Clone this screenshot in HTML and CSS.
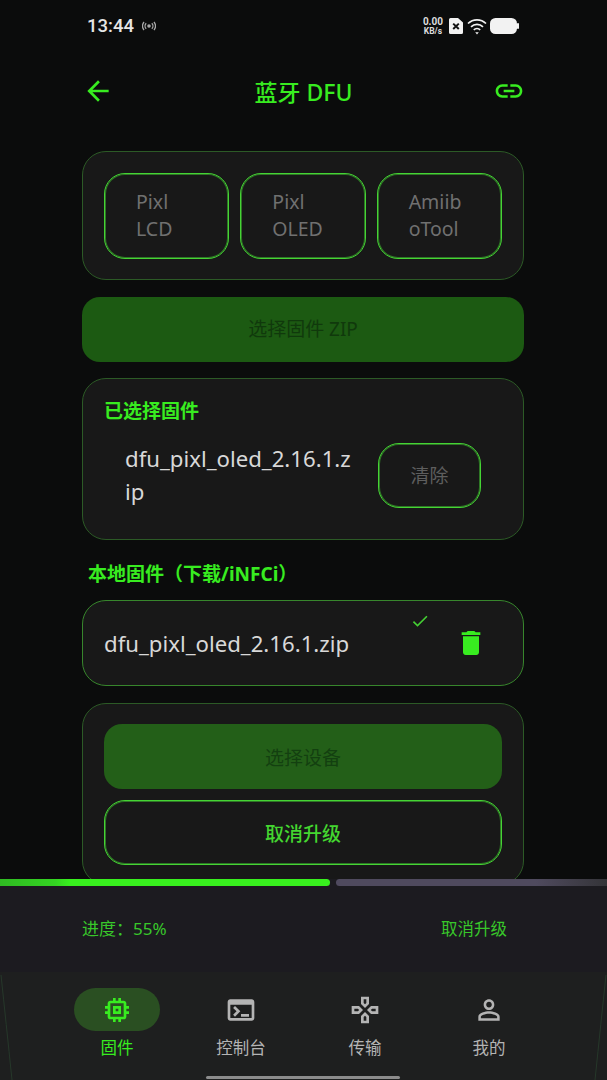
FILE: index.html
```html
<!DOCTYPE html>
<html lang="zh">
<head>
<meta charset="utf-8">
<title>蓝牙 DFU</title>
<link rel="stylesheet" href="styles.css">
</head>
<body>
<div class="page">
  <div class="status">
    <div class="status-left">
      <span class="time">13:44</span>
      <svg class="cast" viewBox="0 0 14 10"><circle cx="7" cy="5" r="1.8" fill="#aaa"/><path d="M4.200 2.200a4 4 0 0 0 0 5.600M9.800 2.200a4 4 0 0 1 0 5.600M2 1a6.500 6.500 0 0 0 0 8M12 1a6.500 6.500 0 0 1 0 8" fill="none" stroke="#aaa" stroke-width="1.300"/></svg>
    </div>
    <div class="status-right">
      <span class="speed"><b class="speed-value">0.00</b><b class="speed-unit">KB/s</b></span>
      <svg class="sim" viewBox="0 0 14 16"><path d="M1.500 0H9l5 4.500v10a1.500 1.500 0 0 1-1.500 1.500h-11A1.500 1.500 0 0 1 0 14.500v-13A1.500 1.500 0 0 1 1.500 0z" fill="#f2f2f2"/><path d="M4.200 5.600l5.600 5.400M9.800 5.600l-5.600 5.400" stroke="#111" stroke-width="2"/></svg>
      <svg class="wifi" viewBox="0 0 20 17"><path d="M1 5.500a13 13 0 0 1 18 0M4 8.800a8.800 8.800 0 0 1 12 0M6.800 11.800a4.600 4.600 0 0 1 6.400 0" fill="none" stroke="#f2f2f2" stroke-width="1.700"/><path d="M8.200 14.200h3.600L10 16.500z" fill="#f2f2f2"/></svg>
      <svg class="battery" viewBox="0 0 29 16"><rect width="27" height="16" rx="5.500" fill="#f2f2f2"/><rect x="27" y="5" width="2" height="6" rx="1" fill="#f2f2f2"/></svg>
    </div>
  </div>

  <header class="top">
    <svg class="icon32 green" viewBox="0 0 24 24"><path d="M20 11H7.830l5.590-5.590L12 4l-8 8 8 8 1.410-1.410L7.830 13H20v-2z"/></svg>
    <h1 class="title">蓝牙 DFU</h1>
    <svg class="icon32 green" viewBox="0 0 24 24"><path d="M3.900 12c0-1.710 1.390-3.100 3.100-3.100h4V7H7c-2.760 0-5 2.240-5 5s2.240 5 5 5h4v-1.900H7c-1.710 0-3.100-1.390-3.100-3.100zM8 13h8v-2H8v2zm9-6h-4v1.900h4c1.710 0 3.100 1.390 3.100 3.100s-1.390 3.100-3.100 3.100h-4V17h4c2.760 0 5-2.240 5-5s-2.240-5-5-5z"/></svg>
  </header>

  <main class="content">
    <section class="card types">
      <button class="type"><span>Pixl<br>LCD</span></button>
      <button class="type"><span>Pixl<br>OLED</span></button>
      <button class="type"><span>Amiib<br>oTool</span></button>
    </section>

    <button class="solid zip">选择固件 ZIP</button>

    <section class="card selected">
      <h2 class="label">已选择固件</h2>
      <div class="selected-row">
        <p class="filename wrap">dfu_pixl_oled_2.16.1.zip</p>
        <button class="clear">清除</button>
      </div>
    </section>

    <h2 class="label section">本地固件（下载/iNFCi）</h2>

    <section class="card local">
      <p class="filename">dfu_pixl_oled_2.16.1.zip</p>
      <svg class="check" viewBox="0 0 24 24"><path d="M9 16.170L4.830 12l-1.420 1.410L9 19 21 7l-1.410-1.410z"/></svg>
      <svg class="trash green" viewBox="0 0 24 24"><path d="M6 19c0 1.100.9 2 2 2h8c1.100 0 2-.9 2-2V7H6v12zM19 4h-3.500l-1-1h-5l-1 1H5v2h14V4z"/></svg>
    </section>

    <section class="card actions">
      <button class="solid device">选择设备</button>
      <button class="outline">取消升级</button>
    </section>
  </main>

  <div class="progress-panel">
    <div class="bar"><span class="bar-done"></span><span class="bar-rest"></span></div>
    <div class="progress-row"><span>进度：55%</span><span class="cancel-link">取消升级</span></div>
  </div>

  <nav class="tabs">
    <div class="tab active">
      <span class="pill"><svg class="icon32" viewBox="0 0 24 24"><path d="M15 9H9v6h6V9zm-2 4h-2v-2h2v2zm8-2V9h-2V7c0-1.100-.9-2-2-2h-2V3h-2v2h-2V3H9v2H7c-1.100 0-2 .9-2 2v2H3v2h2v2H3v2h2v2c0 1.100.9 2 2 2h2v2h2v-2h2v2h2v-2h2c1.100 0 2-.9 2-2v-2h2v-2h-2v-2h2zm-4 6H7V7h10v10z"/></svg></span>
      <span class="tab-label">固件</span>
    </div>
    <div class="tab">
      <span class="pill"><svg class="icon32" viewBox="0 0 24 24"><path d="M20 4H4c-1.100 0-2 .9-2 2v12c0 1.100.9 2 2 2h16c1.100 0 2-.9 2-2V6c0-1.100-.9-2-2-2zm0 14H4V8h16v10zm-2-1h-6v-2h6v2zM7.500 17l-1.410-1.410L8.670 13l-2.590-2.590L7.500 9l4 4-4 4z"/></svg></span>
      <span class="tab-label">控制台</span>
    </div>
    <div class="tab">
      <span class="pill"><svg class="icon32" viewBox="0 0 24 24"><path d="M13 4v2.670l-1 1-1-1V4h2m7 7v2h-2.670l-1-1 1-1H20M6.670 11l1 1-1 1H4v-2h2.670M12 16.330l1 1V20h-2v-2.670l1-1M15 2H9v5.500l3 3 3-3V2zm7 7h-5.500l-3 3 3 3H22V9zM7.500 9H2v6h5.500l3-3-3-3zm4.500 4.500l-3 3V22h6v-5.500l-3-3z"/></svg></span>
      <span class="tab-label">传输</span>
    </div>
    <div class="tab">
      <span class="pill"><svg class="icon32" viewBox="0 0 24 24"><path d="M12 5.900c1.160 0 2.100.94 2.100 2.100s-.94 2.100-2.100 2.100S9.900 9.160 9.900 8s.94-2.100 2.100-2.100m0 9c2.970 0 6.100 1.460 6.100 2.100v1.100H5.900V17c0-.64 3.130-2.100 6.100-2.100M12 4C9.790 4 8 5.790 8 8s1.790 4 4 4 4-1.790 4-4-1.790-4-4-4zm0 9c-2.670 0-8 1.340-8 4v3h16v-3c0-2.660-5.330-4-8-4z"/></svg></span>
      <span class="tab-label">我的</span>
    </div>
    <svg class="edges" viewBox="0 0 607 108" preserveAspectRatio="none"><path d="M1 3Q6 50 12 108M606 3Q601 50 595 108" fill="none" stroke="#26382a" stroke-width="1"/></svg>
    <span class="home"></span>
  </nav>
</div>
</body>
</html>
```

FILE: styles.css
```css
* { box-sizing: border-box; }
html, body { margin: 0; padding: 0; }
body {
  background: #0b0c0c;
  font-family: "Noto Sans", "Noto Sans CJK SC", sans-serif;
  color: #ddd;
}
.page {
  width: 607px;
  height: 1080px;
  display: flex;
  flex-direction: column;
  overflow: hidden;
}
button { font-family: inherit; background: none; padding: 0; }
h1, h2, p { margin: 0; font-weight: 400; }
svg { display: block; fill: currentColor; flex: none; }
.green { color: #38ec20; }

.status {
  height: 52px;
  padding: 0 88px 0 87px;
  display: flex;
  justify-content: space-between;
  align-items: center;
}
.status-left, .status-right { display: flex; align-items: center; }
.time { font-size: 18.500px; font-weight: 500; color: #e6e6e6; font-family: "Roboto", sans-serif; }
.cast { width: 14px; height: 10px; margin-left: 8px; }
.speed { display: flex; flex-direction: column; align-items: center; font-family: "Roboto", sans-serif; color: #ddd; }
.speed-value { font-size: 10px; line-height: 10px; font-weight: 700; }
.speed-unit { font-size: 8.500px; line-height: 9px; font-weight: 700; }
.sim { width: 14px; height: 16px; margin-left: 6px; }
.wifi { width: 20px; height: 17px; margin-left: 4px; }
.battery { width: 29px; height: 16px; margin-left: 3px; }

.top {
  height: 78px;
  padding: 0 82px;
  display: flex;
  align-items: center;
  justify-content: space-between;
}
.icon32 { width: 32px; height: 32px; }
.title { font-size: 23px; font-weight: 500; color: #38ec20; }

.content {
  flex: 1;
  min-height: 0;
  overflow: hidden;
  padding: 21px 83px 0 82px;
  display: flex;
  flex-direction: column;
  gap: 17px;
}
.card {
  flex: none;
  background: #181818;
  border: 1px solid #2c5a26;
  border-radius: 24px;
  padding: 21px;
}
.types { height: 129px; display: flex; gap: 11px; }
.type {
  flex: 1;
  height: 86px;
  border: 1px solid #45d434;
  box-shadow: inset 0 0 0 1px rgba(69, 212, 52, .5);
  border-radius: 21px;
  padding: 0 0 2px 31px;
  text-align: left;
  color: #707070;
  font-size: 19.500px;
  line-height: 27px;
}
.solid {
  flex: none;
  height: 65px;
  border: 0;
  border-radius: 18px;
  background: #1c5a12;
  color: #10390c;
  font-size: 19px;
}
.zip { padding-bottom: 4px; margin-bottom: -1px; }
.selected { height: 162px; padding-top: 19px; }
.label { font-size: 19px; font-weight: 700; line-height: 26px; color: #38ec20; }
.selected-row { display: flex; align-items: center; padding-left: 21px; margin-top: 18px; }
.filename { font-size: 22.200px; line-height: 33px; color: #d8d8d8; }
.wrap { width: 228px; word-break: break-all; }
.clear {
  width: 103px;
  height: 65px;
  margin-left: 25px;
  border: 1px solid #45d434;
  box-shadow: inset 0 0 0 1px rgba(69, 212, 52, .5);
  border-radius: 21px;
  color: #5e5e5e;
  font-size: 19px;
}
.section { padding-left: 6px; margin-top: 4px; margin-bottom: -4px; }
.local {
  height: 86px;
  padding: 0 21px;
  position: relative;
  display: flex;
  align-items: center;
  justify-content: space-between;
  border-color: #37862c;
}
.check { position: absolute; left: 327px; top: 10px; width: 20px; height: 20px; color: #44cf33; }
.trash { width: 32px; height: 32px; margin-right: 15px; }
.actions { height: 182px; padding-top: 20px; display: flex; flex-direction: column; gap: 11px; }
.device { background: #235f18; color: #134010; }
.outline {
  flex: none;
  height: 65px;
  border: 1px solid #45d434;
  box-shadow: inset 0 0 0 1px rgba(69, 212, 52, .5);
  border-radius: 21px;
  color: #44d630;
  font-size: 19px;
  font-weight: 500;
}

.progress-panel { height: 93px; flex: none; background: #1c1b20; }
.bar { height: 7px; display: flex; gap: 6px; }
.bar-done { width: 330px; background: linear-gradient(90deg, #2fbb22 0, #34d422 55px, #38f01e 70px); border-radius: 0 4px 4px 0; }
.bar-rest { flex: 1; background: linear-gradient(90deg, #4f4a5e 0, #4f4a5e 200px, #343438 100%); border-radius: 4px 0 0 4px; }
.progress-row {
  display: flex;
  justify-content: space-between;
  align-items: center;
  padding: 31px 100px 0 82px;
  font-size: 17px;
  line-height: 24px;
  color: #38c72a;
}
.cancel-link { font-size: 16.500px; }
.tabs {
  position: relative;
  height: 108px;
  flex: none;
  padding: 16px 56px 0 55px;
  background: #1e1f1f;
  display: flex;
}
.tab { flex: 1; display: flex; flex-direction: column; align-items: center; color: #b4b4b4; }
.pill { width: 86px; height: 43px; border-radius: 22px; display: flex; align-items: center; justify-content: center; }
.active { color: #38ec20; }
.active .pill { background: #2a4f22; }
.tab-label { margin-top: 6px; font-size: 16.500px; line-height: 22px; }
.edges { position: absolute; inset: 0; width: 100%; height: 100%; pointer-events: none; }
.home { position: absolute; left: 206px; bottom: 1px; width: 194px; height: 3px; border-radius: 2px; background: #8c8c8c; }
```
